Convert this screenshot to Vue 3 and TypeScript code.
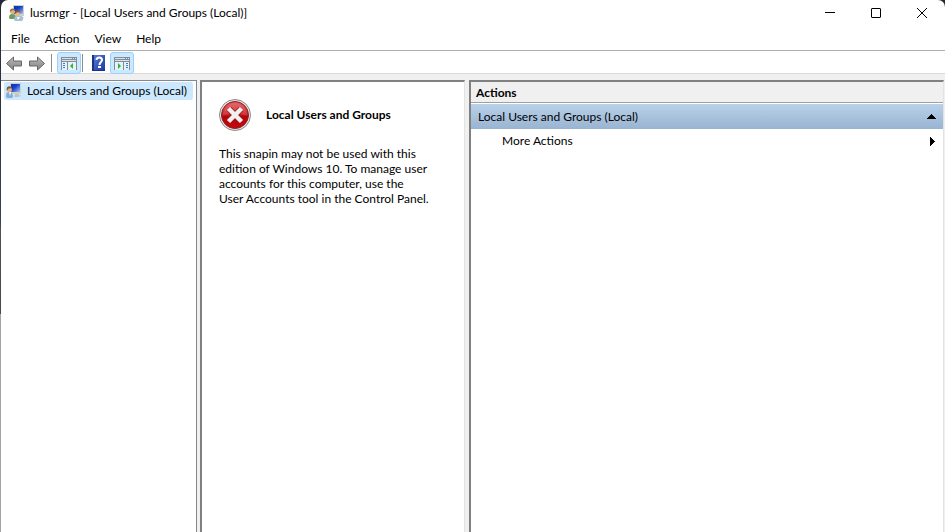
<script setup lang="ts">
import { ref } from 'vue'

const menus: string[] = ['File', 'Action', 'View', 'Help']
const snapin = 'Local Users and Groups'
const node = `${snapin} (Local)`
const message: string[] = [
  'This snapin may not be used with this',
  'edition of Windows 10. To manage user',
  'accounts for this computer, use the',
  'User Accounts tool in the Control Panel.',
]
const treeShown = ref(true)
const actionsShown = ref(true)
const expanded = ref(true)
</script>

<template>
  <div class="window">
    <svg class="defs" width="0" height="0" aria-hidden="true">
      <defs>
        <linearGradient id="screen" x1="0" y1="0" x2="1" y2="1">
          <stop offset="0" stop-color="#0a2fae" />
          <stop offset=".4" stop-color="#1440c8" />
          <stop offset="1" stop-color="#a4c6f6" />
        </linearGradient>
        <linearGradient id="metal" x1="0" y1="0" x2="0" y2="1">
          <stop offset="0" stop-color="#bcbcbc" />
          <stop offset="1" stop-color="#808080" />
        </linearGradient>
        <linearGradient id="book" x1="0" y1="0" x2="1" y2="1">
          <stop offset="0" stop-color="#5878d8" />
          <stop offset="1" stop-color="#1c3aa4" />
        </linearGradient>
        <linearGradient id="red" x1="0" y1="0" x2="0" y2="1">
          <stop offset="0" stop-color="#e2585a" />
          <stop offset=".5" stop-color="#c81c20" />
          <stop offset=".55" stop-color="#b40408" />
          <stop offset="1" stop-color="#c40a10" />
        </linearGradient>
      </defs>
    </svg>

    <header class="titlebar">
      <svg class="app-icon" viewBox="0 0 16 16" aria-hidden="true">
        <path d="M4 0h11v11H4z" fill="#d0d0c8" />
        <path d="M5 1h9v8H5z" fill="url(#screen)" />
        <path d="M10 11h3l2 2-2 1h-3z" fill="#c4c4bc" />
        <path d="M0 13c0-3 1-4 3-4s4 1 4 4l-1 1H1z" fill="#6c9c58" />
        <circle cx="3.5" cy="6.5" r="2.5" fill="#dcb088" />
        <path d="M1 7c-1-4 5-5 5-1L4 5 2 6z" fill="#96703c" />
        <path d="M5 15c0-3 1-4 4-4s5 1 5 4l-1 1H6z" fill="#a9bfd8" />
        <circle cx="8.5" cy="8.5" r="2.5" fill="#e0b88c" />
        <path d="M6 9c-1-5 5-5 5-1L9 7 7 8z" fill="#7d5a34" />
        <path d="m8 12 1 3 2-3z" fill="#fff" />
      </svg>
      <h1>lusrmgr - [{{ node }}]</h1>
      <div class="captions">
        <button type="button" aria-label="Minimize">
          <svg viewBox="0 0 12 12"><path d="M1 5.5h10" /></svg>
        </button>
        <button type="button" aria-label="Maximize">
          <svg viewBox="0 0 12 12"><rect x="1.5" y="1.5" width="9" height="9" rx=".5" /></svg>
        </button>
        <button type="button" aria-label="Close">
          <svg viewBox="0 0 12 12"><path d="m1 1 10 10M11 1 1 11" /></svg>
        </button>
      </div>
    </header>

    <nav class="menubar">
      <button v-for="menu in menus" :key="menu" type="button">{{ menu }}</button>
    </nav>

    <div class="toolbar" role="toolbar">
      <button class="arrow" type="button" aria-label="Back">
        <svg viewBox="0 0 18 16"><path d="M1.500 8.500 8.500 2v4h8v5h-8v4z" fill="url(#metal)" stroke="#686868" /></svg>
      </button>
      <button class="arrow" type="button" aria-label="Forward">
        <svg viewBox="0 0 18 16"><path d="M16.500 8.500 9.500 2v4h-8v5h8v4z" fill="url(#metal)" stroke="#686868" /></svg>
      </button>
      <span class="divider"></span>
      <button class="tool" :class="{ on: treeShown }" type="button" aria-label="Console tree" @click="treeShown = !treeShown">
        <svg viewBox="0 0 16 13">
          <path d="M0 0h16v13H0z" fill="#858b94" />
          <path d="M1 1h10v1H1zM12 1h1v1h-1zM14 1h1v1h-1zM1 3h14v1H1z" fill="#d4e4f0" />
          <path d="M1 5h5v8H1zM7 5h8v8H7z" fill="#e4f2fc" />
          <path d="M2 6h2v1H2zM2 8h2v1H2zM2 10h2v1H2z" fill="#3f7dc8" />
          <path d="M12 6v6L9 9z" fill="#35b52a" />
        </svg>
      </button>
      <span class="divider"></span>
      <button class="tool" type="button" aria-label="Help">
        <svg class="book" viewBox="0 0 13 16">
          <path d="M0 0h13v16H0z" fill="#1b3384" />
          <path d="M2 0h11v15H2z" fill="url(#book)" />
          <path d="M4.500 5c0-3.500 5.500-3 5.500 0 0 2-2.500 2-2.500 5" fill="none" stroke="#fff" stroke-width="2" />
          <path d="M6 11h3v2H6z" fill="#fff" />
        </svg>
      </button>
      <button class="tool" :class="{ on: actionsShown }" type="button" aria-label="Action pane" @click="actionsShown = !actionsShown">
        <svg viewBox="0 0 16 13">
          <path d="M0 0h16v13H0z" fill="#858b94" />
          <path d="M1 1h10v1H1zM12 1h1v1h-1zM14 1h1v1h-1zM1 3h14v1H1z" fill="#d4e4f0" />
          <path d="M1 5h8v8H1zM10 5h5v8h-5z" fill="#e4f2fc" />
          <path d="M12 6h2v1h-2zM12 8h2v1h-2zM12 10h2v1h-2z" fill="#3f7dc8" />
          <path d="M4 6v6l3-3z" fill="#35b52a" />
        </svg>
      </button>
    </div>

    <main class="panes">
      <section v-if="treeShown" class="tree">
        <button class="node" type="button">
          <svg class="app-icon" viewBox="0 0 16 16" aria-hidden="true">
            <path d="M4 0h11v11H4z" fill="#d0d0c8" />
            <path d="M5 1h9v8H5z" fill="url(#screen)" />
            <path d="M9 11h3l3 2-3 1H8z" fill="#c4c4bc" />
            <path d="M0 14c0-4 1-5 3-5s4 1 4 5l-1 1H1z" fill="#86acd2" />
            <circle cx="3.5" cy="6.5" r="2.5" fill="#e0b080" />
            <path d="M1 8C-1 2 6 2 6 6L4 5 2 6z" fill="#80592e" />
            <path d="m3 9 1 4 1-4z" fill="#fff" />
          </svg>
          <span>{{ node }}</span>
        </button>
      </section>

      <section class="result">
        <div class="heading">
          <svg viewBox="0 0 32 32" aria-hidden="true">
            <circle cx="16" cy="16" r="15.5" fill="#e8e8e8" stroke="#888" />
            <circle cx="16" cy="16" r="13.5" fill="url(#red)" stroke="#8d2024" />
            <path d="M4 16a12 12 0 0 1 24 0q-12-3-24 0z" fill="#fff" opacity=".12" />
            <path d="m10 10 12 12M22 10 10 22" stroke="#94171a" stroke-width="6" />
            <path d="m9.500 9.500 13 13M22.500 9.500l-13 13" stroke="#f0f0f0" stroke-width="4.500" />
          </svg>
          <h2>{{ snapin }}</h2>
        </div>
        <p><span v-for="line in message" :key="line">{{ line }}</span></p>
      </section>

      <aside v-if="actionsShown" class="actions">
        <h2>Actions</h2>
        <button class="group" type="button" :aria-expanded="expanded" @click="expanded = !expanded">
          <span>{{ node }}</span>
          <svg width="9" height="5" viewBox="0 0 9 5" shape-rendering="crispEdges"><path d="M4 0h1v1h1v1h1v1h1v1h1v1H0V4h1V3h1V2h1V1h1z" /></svg>
        </button>
        <button v-if="expanded" class="more" type="button">
          <span>More Actions</span>
          <svg width="5" height="9" viewBox="0 0 5 9" shape-rendering="crispEdges"><path d="M0 0h1v1h1v1h1v1h1v1h1v1H4v1H3v1H2v1H1v1H0z" /></svg>
        </button>
      </aside>
    </main>
  </div>
</template>

<style>
body {
  margin: 0;
  background: linear-gradient(#22283a, #3a4056 42%, #50504e 43%, #48484a 59%, #a4a4a6 59%) no-repeat;
}
</style>

<style scoped>
.window {
  display: flex;
  flex-direction: column;
  min-height: 100vh;
  margin-left: 1px;
  border-radius: 7px 7px 0 0;
  background: #fff;
  color: #000;
  font: 12px/16px Lato, "Open Sans", sans-serif;
}
.defs {
  position: absolute;
}
button {
  margin: 0;
  padding: 0;
  border: 0;
  background: none;
  color: inherit;
  font: inherit;
  text-align: left;
}
svg {
  display: block;
  flex: none;
}
h1,
h2,
p {
  margin: 0;
  font-size: inherit;
}
h1 {
  font-weight: 400;
}
.app-icon {
  width: 16px;
  height: 16px;
}
.titlebar {
  display: flex;
  align-items: center;
  gap: 5px;
  height: 26px;
  padding-left: 8px;
}
.captions {
  display: flex;
  margin-left: auto;
}
.captions button {
  display: grid;
  place-items: center;
  width: 46px;
  height: 24px;
}
.captions svg {
  width: 12px;
  height: 12px;
  fill: none;
  stroke: #000;
}
.menubar {
  display: flex;
  gap: 15px;
  height: 23px;
  padding: 1px 0 0 10px;
  border-bottom: 1px solid #b0b0b0;
}
.toolbar {
  display: flex;
  align-items: center;
  height: 21px;
  padding: 1px 0 0 4px;
  border-bottom: 1px solid #dadada;
}
.arrow {
  width: 23px;
}
.arrow svg {
  width: 18px;
  height: 16px;
}
.divider {
  width: 1px;
  height: 18px;
  margin-right: 5px;
  background: #8c8c8c;
}
.tool {
  display: grid;
  place-items: center;
  box-sizing: border-box;
  width: 24px;
  height: 22px;
  border: 1px solid transparent;
  border-radius: 3px;
}
.tool + .divider {
  margin-left: 1px;
  margin-right: 3px;
}
.tool.on {
  padding-top: 2px;
  border-color: #99d1ff;
  background: #cce8ff;
}
.tool svg {
  width: 16px;
  height: 13px;
}
.tool .book {
  width: 13px;
  height: 16px;
}
.panes {
  display: flex;
  flex: 1;
  padding: 6px 1px 0 0;
  background: #f0f0f0;
}
.tree {
  box-sizing: border-box;
  width: 196px;
  margin-right: 3px;
  border-top: 1px solid #828790;
  border-right: 1px solid #828790;
  background: #fff;
}
.node {
  display: flex;
  align-items: center;
  gap: 5px;
  height: 18px;
  margin: 1px 0 0 3px;
  padding: 0 6px 0 2px;
  border-radius: 2px;
  background: #cce8ff;
  white-space: nowrap;
}
.result,
.actions {
  box-sizing: border-box;
  border: 2px solid #808080;
  border-width: 2px 1px 0 2px;
  border-right-color: #e3e3e3;
  background: #fff;
}
.result {
  width: 265px;
  margin-right: 4px;
  padding: 17px;
}
.heading {
  display: flex;
  align-items: center;
  gap: 15px;
}
.heading svg {
  width: 32px;
  height: 32px;
}
.result p {
  margin-top: 15px;
  line-height: 15px;
}
.result p span {
  display: block;
  white-space: nowrap;
}
.actions {
  flex: 1;
}
.actions h2 {
  height: 20px;
  padding-left: 5px;
  border-bottom: 1px solid #a0a0a0;
  background: #f0f0f0;
  line-height: 21px;
}
.group,
.more {
  display: flex;
  align-items: center;
  justify-content: space-between;
  width: 100%;
  height: 25px;
  padding: 0 7px;
}
.group {
  margin-top: 1px;
  background: linear-gradient(#b9d1ea, #99b4d1);
}
.more {
  height: 24px;
  padding: 0 8px 0 31px;
}
</style>
